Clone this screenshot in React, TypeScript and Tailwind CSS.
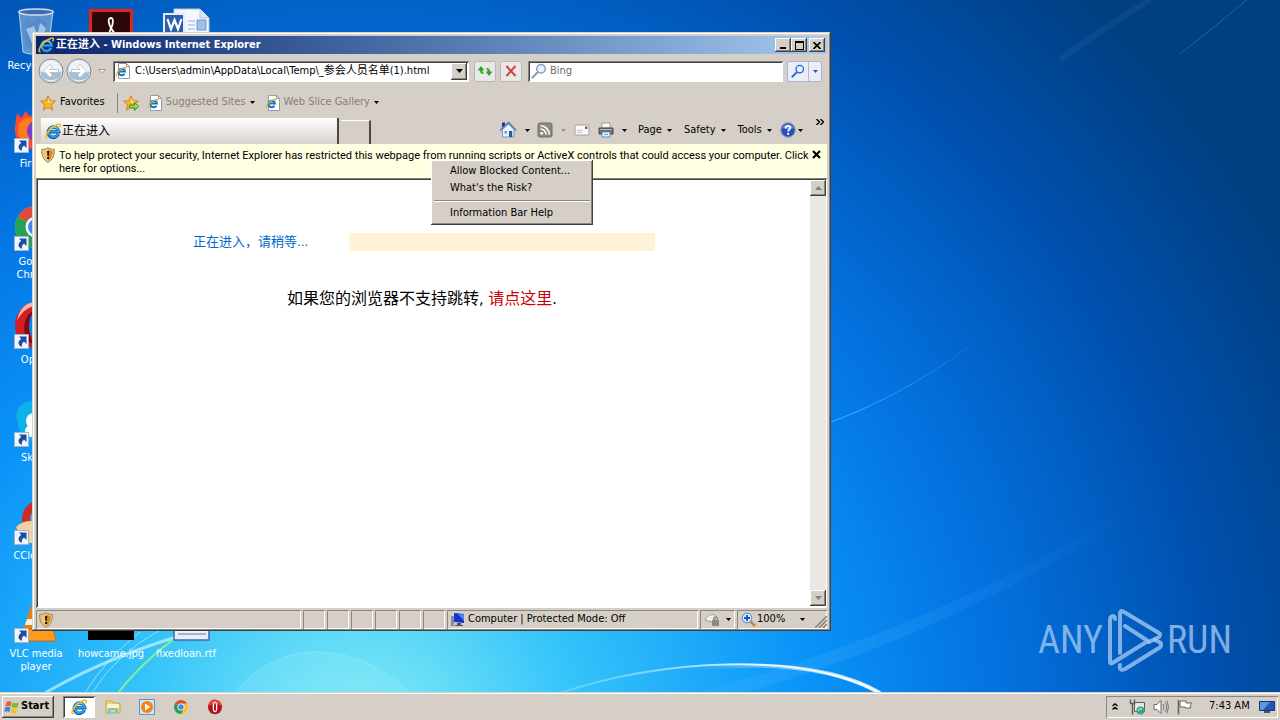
import React from "react";

const raised =
  "bg-[#d6cfc8] shadow-[inset_-1px_-1px_#404040,inset_1px_1px_#ffffff,inset_-2px_-2px_#8a8680]";
const sunken =
  "shadow-[inset_1px_1px_#808080,inset_-1px_-1px_#ffffff,inset_2px_2px_#404040]";
const pane = "shadow-[inset_1px_1px_#8a8680,inset_-1px_-1px_#ffffff]";

type IconProps = { className?: string };

const Arrow = ({ className = "text-black" }: IconProps) => (
  <svg className={`shrink-0 ${className}`} width="5" height="3" viewBox="0 0 5 3" aria-hidden>
    <path d="M0 0h5L2.500 3z" fill="currentColor" />
  </svg>
);

const IeMark = ({ className = "size-4" }: IconProps) => (
  <svg className={`shrink-0 ${className}`} viewBox="0 0 16 16" fill="none" aria-hidden>
    <path d="M13.300 11.200A5.200 5.200 0 1 1 13.700 8.700H5" stroke="#0b4f9e" strokeWidth="3.400" />
    <path d="M13 11A5 5 0 1 1 13.500 8.500H5" stroke="#2f9fe8" strokeWidth="2.200" />
    <path d="M4.500 6A5 5 0 0 1 12 5.200" stroke="#8fdcff" strokeWidth="1" />
    <path d="M2 14.800C-1.500 13.500 5 4.500 12.500 1.500c3-1.200 3.500.3 2.400 2.400" stroke="#f2bd1d" strokeWidth="1.500" strokeLinecap="round" />
  </svg>
);

const IePage = ({ className = "size-4" }: IconProps) => (
  <svg className={`shrink-0 ${className}`} viewBox="0 0 16 16" fill="none" aria-hidden>
    <path d="M3.500.5h8l3 3v12h-11z" fill="#fff" stroke="#8e9bb0" />
    <path d="M11.500.5v3h3" stroke="#8e9bb0" />
    <path d="M9.500 10.800A3.300 3.300 0 1 1 10 8.600H4" stroke="#1673c4" strokeWidth="2" />
    <path d="M1.500 13C0 12 4 6 9.500 4.300c2-.5 1.800.7 1.200 1.500" stroke="#e9b41d" strokeWidth="1.200" />
  </svg>
);

const Star = ({ add = false }: { add?: boolean }) => (
  <svg className="size-4 shrink-0" viewBox="0 0 16 16" aria-hidden>
    <path d="M8 .8l2.200 4.800 5.200.6-3.900 3.500 1.100 5.300L8 12.400 3.400 15l1.100-5.300L.6 6.200l5.200-.6z" fill="#fbb42c" stroke="#c77a0a" strokeWidth=".8" />
    <path d="M8 2.800l1.500 3.500 3.600.5-5.100 1z" fill="#ffe38a" />
    {add && <path d="M6.500 10h5V7.500l4.300 3.900-4.300 3.900v-2.500h-5z" fill="#8fe05c" stroke="#2f8d1c" strokeWidth=".9" />}
  </svg>
);

const Shield = () => (
  <svg className="size-4 shrink-0" viewBox="0 0 16 16" aria-hidden>
    <path d="M8 .7c2 1.300 4 1.700 6.300 1.700.2 6-1.300 10.300-6.300 13-5-2.700-6.500-7-6.300-13C4 2.400 6 2 8 .7z" fill="#f0c479" stroke="#8f867a" />
    <path d="M8 2.500v11.200c3.500-2.300 4.800-5.600 4.700-9.800-1.800-.1-3.200-.5-4.700-1.400z" fill="#d98a1c" />
    <path d="M7 4h2.200l-.4 5H7.400zM7.100 10h2v2h-2z" fill="#2a1a05" />
  </svg>
);

const Glass = ({ color = "#2f6fd6", className = "size-4" }: { color?: string; className?: string }) => (
  <svg className={`shrink-0 ${className}`} viewBox="0 0 16 16" fill="none" aria-hidden>
    <path d="M6.500 9.500L1.500 14.500" stroke={color} strokeWidth="2.200" strokeLinecap="round" />
    <circle cx="10" cy="5.800" r="4.300" fill="#e6f3ff" stroke={color} strokeWidth="1.500" />
  </svg>
);

const RoundArrow = ({ flip = false }: { flip?: boolean }) => (
  <svg className={flip ? "size-[26px] -scale-x-100" : "size-[26px]"} viewBox="0 0 26 26" aria-hidden>
    <circle cx="13" cy="13" r="12" fill="#dfe6ec" stroke="#818a94" />
    <path d="M2.500 13a10.500 10.500 0 0 1 21 0c-6 2-15 2-21 0z" fill="#eef3f7" />
    <path d="M2.500 13.500c5 2 16 2 21 0a10.500 10.500 0 0 1-21 0z" fill="#a3c0d2" />
    <path d="M6 20c4 3 10 3 14 0-3 4.500-11 4.500-14 0z" fill="#e6f6fc" />
    <path d="M5.500 13l6.500-6.500 2.500 2.500-2.500 2.500h8.500v3H12l2.500 2.500-2.500 2.500z" fill="#fff" stroke="#93a5b2" strokeWidth=".6" />
  </svg>
);

const HomeIcon = () => (
  <svg className="size-[18px]" viewBox="0 0 18 18" aria-hidden>
    <path d="M3 1.500h3V6H3z" fill="#1c2fa0" />
    <path d="M3.500 8.500L9.500 3l5.500 5.500V16h-11.500z" fill="#e8f0fb" stroke="#8093b8" />
    <path d="M1 9.500L9.500 1.500 17 9.500" fill="none" stroke="#5a78b8" strokeWidth="1.600" />
    <path d="M10 10h3.200v6H10z" fill="#235b93" />
    <path d="M5.500 10h2.500v2.500H5.500z" fill="#4aa0dd" />
  </svg>
);

const FeedIcon = () => (
  <svg className="size-4" viewBox="0 0 16 16" fill="none" aria-hidden>
    <rect x="1" y="1" width="14" height="14" rx="2" fill="#8c8a88" stroke="#6e6c6a" />
    <circle cx="4.700" cy="11.300" r="1.400" fill="#fff" />
    <path d="M3.500 7a5.500 5.500 0 0 1 5.500 5.500M3.500 3.800a8.700 8.700 0 0 1 8.700 8.700" stroke="#fff" strokeWidth="1.600" />
  </svg>
);

const MailIcon = () => (
  <svg className="h-3 w-4" viewBox="0 0 16 12" aria-hidden>
    <path d="M1 1h14v10H1z" fill="#fafafa" stroke="#a5a3a0" />
    <path d="M11 2.500h2.500V5H11z" fill="#d83a34" />
    <path d="M3 6.500h6M3 8.500h5" stroke="#c4c4c4" />
  </svg>
);

const PrinterIcon = () => (
  <svg className="size-4" viewBox="0 0 16 16" aria-hidden>
    <path d="M4 1h8v5H4z" fill="#fff" stroke="#9a9a9a" />
    <path d="M1 6h14v6H1z" fill="#6e6e70" stroke="#4c4c4e" />
    <path d="M2 7h12v1H2z" fill="#b8b8ba" />
    <path d="M4 10h8v5H4z" fill="#e9f6fc" stroke="#5a8fae" />
    <path d="M6 12h4v1H6z" fill="#33b3df" />
  </svg>
);

const HelpIcon = () => (
  <svg className="size-4" viewBox="0 0 16 16" fill="none" aria-hidden>
    <circle cx="8" cy="8" r="7.300" fill="#2752ba" stroke="#9aa5bd" strokeWidth="1.200" />
    <path d="M2.500 6a6 6 0 0 1 11 0c-3 1.500-8 1.500-11 0z" fill="#6f94e0" />
    <path d="M5.600 6.200C5.700 3 10.600 3.300 10.300 6c-.2 1.500-2.200 1.600-2.200 3.400" stroke="#fff" strokeWidth="1.700" />
    <circle cx="8.100" cy="11.800" r="1.100" fill="#fff" />
  </svg>
);

const Shortcut = () => (
  <svg className="absolute bottom-0 left-[14px] size-[15px]" viewBox="0 0 15 15" aria-hidden>
    <path d="M.5.5h14v14H.5z" fill="#f1f5fb" stroke="#9fb3cc" />
    <path d="M5 2.500h7.500V10L10 7.500C8 9 7.500 10.500 8 12.800 3.500 11.500 3.500 7 7.300 5z" fill="#1c4da0" />
  </svg>
);

const BinArt = () => (
  <svg className="size-12" viewBox="0 0 48 48" aria-hidden>
    <path d="M7 4h34l-5 41c-5 3-20 3-25 0z" fill="#8db2d8" fillOpacity=".65" stroke="#b5cfe6" />
    <path d="M13 12l7 3 6-4 9 5-2 24H14z" fill="#4f86c6" fillOpacity=".6" />
    <path d="M14 22l8-3 3 8-5 9zM28 16l6 5-4 12-4-8z" fill="#c4dcf0" fillOpacity=".7" />
    <ellipse cx="24" cy="5" rx="17" ry="3" fill="#3a6cae" stroke="#d3dce6" strokeWidth="1.500" />
  </svg>
);

const FirefoxArt = () => (
  <svg className="size-12" viewBox="0 0 48 48" aria-hidden>
    <path d="M5 8l4 5 5-7 3 5C34 4 45 15 43 29c-2 11-12 16-21 15C8 43 2 32 3 22z" fill="#ff4a30" />
    <path d="M7 19c4-7 12-8 18-4L14 40C7 35 4 27 7 19z" fill="#ff7b1c" />
    <circle cx="26" cy="26" r="11" fill="#7a3fd0" />
  </svg>
);

const ChromeArt = ({ className = "size-12" }: IconProps) => (
  <svg className={className} viewBox="0 0 48 48" aria-hidden>
    <circle cx="24" cy="24" r="21" fill="#fbc02d" />
    <path d="M24 24L5.800 13.500A21 21 0 0 1 42.200 13.500H24z" fill="#dd4b3e" />
    <path d="M5.800 13.500L24 24v21A21 21 0 0 1 5.800 13.500z" fill="#27a155" />
    <path d="M24 24l9 5-9 16z" fill="#27a155" />
    <circle cx="24" cy="24" r="10.500" fill="#fff" />
    <circle cx="24" cy="24" r="8" fill="#4386ee" />
  </svg>
);

const OperaArt = ({ className = "size-12" }: IconProps) => (
  <svg className={className} viewBox="0 0 48 48" aria-hidden>
    <ellipse cx="24" cy="24" rx="21" ry="22" fill="#b80f1a" />
    <path d="M4 20C6 5 18 1 24 2c8 0 18 6 20 18-12-6-28-6-40 0z" fill="#e5453f" />
    <ellipse cx="24" cy="24" rx="7" ry="16" fill="#fff" />
    <ellipse cx="24" cy="24" rx="3" ry="13" fill="#a30d15" />
  </svg>
);

const OperaRing = () => (
  <svg className="size-12" viewBox="0 0 48 48" aria-hidden>
    <path fillRule="evenodd" d="M24 1a21 23 0 1 0 0 46 21 23 0 1 0 0-46zM25 9c5 0 8 7 8 15s-3 15-8 15-8-7-8-15 3-15 8-15z" fill="#d01f26" />
    <path d="M5 20C7 6 16 1 24 1c4 0 7 1 10 3C24 2 10 8 5 20z" fill="#f7b3ae" />
    <path d="M25 9c-9 2-11 24-3 34l-5-2C9 32 11 11 25 9z" fill="#7d0a10" />
  </svg>
);

const SkypeArt = () => (
  <svg className="size-12" viewBox="0 0 48 48" aria-hidden>
    <path d="M14 3c5-2 9 0 11 2 13 0 21 10 19 21 4 11-7 20-17 16C14 44 5 34 6 23 2 15 6 6 14 3z" fill="#0fb2e8" />
    <circle cx="22" cy="22" r="8" fill="#fff" />
    <circle cx="19" cy="32" r="6" fill="#fff" />
  </svg>
);

const CleanerArt = () => (
  <svg className="size-12" viewBox="0 0 48 48" aria-hidden>
    <circle cx="29" cy="22" r="19" fill="#cf2c27" />
    <circle cx="29" cy="22" r="11" fill="#58a6dc" />
    <path d="M4 30c8-7 16-7 24-4v20H12z" fill="#f2cf9e" />
  </svg>
);

const ConeArt = () => (
  <svg className="size-12" viewBox="0 0 48 48" aria-hidden>
    <path d="M22 3h5l13 35H10z" fill="#f07a12" />
    <path d="M15 24h19l2 6H13z" fill="#f4f1ec" />
    <path d="M9 34h32l3 12H3z" fill="#ff9a1e" stroke="#cf6508" />
  </svg>
);

const AcrobatArt = () => (
  <svg className="size-12" viewBox="0 0 48 48" fill="none" aria-hidden>
    <path d="M3.500 3.500h41v41h-41z" fill="#2b0808" stroke="#e2231a" strokeWidth="3" />
    <path d="M24 11c-4 0-2 7 0 10 2-3 3-10 0-10zM24 21c-1 4-4 10-9 16M24 21c2 4 5 8 12 11" stroke="#fff" strokeWidth="1.800" />
  </svg>
);

const WordArt = () => (
  <svg className="size-12" viewBox="0 0 48 48" fill="none" aria-hidden>
    <path d="M12 2h26l9 9v36H12z" fill="#f4f8fd" stroke="#b6c6dc" />
    <path d="M38 2v9h9" fill="#dce7f4" stroke="#b6c6dc" />
    <path d="M26 14h7M26 18h7M26 22h7M26 26h19" stroke="#8fb0dc" />
    <path d="M35 13h9v10h-9z" fill="#9fc0e8" stroke="#6a94cc" />
    <path d="M2 7h20v20H2z" fill="#2d5fae" stroke="#e3edf8" strokeWidth="2" />
    <path d="M5.500 12l3.500 10 3.500-9 3.500 9 3.500-10" stroke="#fff" strokeWidth="2.200" />
  </svg>
);

const BlackArt = () => (
  <svg className="size-12" viewBox="0 0 48 48" aria-hidden>
    <path d="M1 4h46v41H1z" fill="#000" />
  </svg>
);

const DocArt = () => (
  <svg className="size-12" viewBox="0 0 48 48" aria-hidden>
    <path d="M12 3h35v42H12z" fill="#e8effb" stroke="#4a68a8" strokeWidth="1.500" />
    <path d="M16 34h28M16 39h28" stroke="#8aa3d4" strokeWidth="1.500" />
  </svg>
);

const columns = [
  {
    at: "justify-start",
    items: [
      { label: "Recycle Bin", art: <BinArt />, link: false },
      { label: "Firefox", art: <FirefoxArt />, link: true },
      { label: "Google Chrome", art: <ChromeArt />, link: true },
      { label: "Opera", art: <OperaRing />, link: true },
      { label: "Skype", art: <SkypeArt />, link: true },
      { label: "CCleaner", art: <CleanerArt />, link: true },
      { label: "VLC media player", art: <ConeArt />, link: true },
    ],
  },
  {
    at: "justify-between",
    items: [
      { label: "", art: <AcrobatArt />, link: false },
      { label: "howcame.jpg", art: <BlackArt />, link: false },
    ],
  },
  {
    at: "justify-between",
    items: [
      { label: "", art: <WordArt />, link: false },
      { label: "fixedloan.rtf", art: <DocArt />, link: false },
    ],
  },
];

const Wallpaper = () => (
  <svg className="absolute inset-0 h-full w-full" viewBox="0 0 1280 720" preserveAspectRatio="xMidYMin slice" fill="none" aria-hidden>
    <defs>
      <linearGradient id="arc" x1="560" x2="900" y1="0" y2="0" gradientUnits="userSpaceOnUse">
        <stop offset="0" stopColor="#7fd8ff" stopOpacity=".5" />
        <stop offset=".6" stopColor="#d8f4ff" />
        <stop offset="1" stopColor="#fff" />
      </linearGradient>
      <linearGradient id="arcGlow" x1="700" x2="860" y1="0" y2="0" gradientUnits="userSpaceOnUse">
        <stop offset="0" stopColor="#fff" stopOpacity="0" />
        <stop offset="1" stopColor="#fff" stopOpacity=".8" />
      </linearGradient>
      <linearGradient id="ray" x1="830" x2="990" y1="0" y2="0" gradientUnits="userSpaceOnUse">
        <stop offset="0" stopColor="#5cc0ff" stopOpacity=".8" />
        <stop offset="1" stopColor="#5cc0ff" stopOpacity="0" />
      </linearGradient>
      <linearGradient id="beam" x1="830" x2="1140" y1="680" y2="510" gradientUnits="userSpaceOnUse">
        <stop offset="0" stopColor="#4db4ff" stopOpacity=".2" />
        <stop offset="1" stopColor="#4db4ff" stopOpacity="0" />
      </linearGradient>
    </defs>
    <path d="M700 692Q930 630 1130 508L1134 514Q940 640 720 700z" fill="url(#beam)" />
    <path d="M1180 54Q1215 27 1250-3" stroke="#5f9bd0" strokeOpacity=".4" />
    <path d="M1060 60Q1100 30 1150 0" stroke="#5f9bd0" strokeOpacity=".1" strokeWidth="6" />
    <path d="M820 426Q910 395 990 330" stroke="url(#ray)" />
    <path d="M230 700C270 640 350 635 408 692" stroke="#a8f0ff" strokeOpacity=".4" />
    <path d="M230 700C270 640 350 635 408 692z" fill="#a8f0ff" fillOpacity=".15" />
    <path d="M560 693C660 660 800 650 880 693" stroke="url(#arc)" strokeWidth="2" />
    <path d="M700 668C780 661 840 670 880 693" stroke="url(#arcGlow)" strokeWidth="4" />
    <path d="M45 693Q110 655 200 630" stroke="#c8f4ff" strokeWidth="3" strokeOpacity=".7" />
    <path d="M85 693Q105 660 140 632M92 693Q115 655 160 630" stroke="#b8eeff" strokeOpacity=".7" />
    <path d="M118 693Q148 655 190 628" stroke="#8ff08a" strokeWidth="2" />
  </svg>
);

const Desktop = () => (
  <ul className="absolute left-0 top-[7px] flex h-[668px] text-center text-[11px] leading-[13px] text-white">
    {columns.map((col, c) => (
      <li key={c} className="w-[75px]">
        <ul className={`flex h-full flex-col ${col.at}`}>
          {col.items.map((item) => (
            <li key={item.label} className="relative h-[98px] w-[72px] shrink-0 last:h-[80px]">
              <div className="relative flex h-12 justify-center">
                {item.art}
                {item.link && <Shortcut />}
              </div>
              <p className="mt-1">{item.label}</p>
            </li>
          ))}
        </ul>
      </li>
    ))}
  </ul>
);

const TitleBar = () => (
  <header className="flex h-[18px] shrink-0 items-center gap-[2px] bg-linear-to-r from-[#0a246a] to-[#a6caf0] px-[2px]">
    <IeMark />
    <h1 className="flex-1 text-[11px] font-bold text-white">正在进入 - Windows Internet Explorer</h1>
    <div className="flex">
      <button aria-label="Minimize" className={`flex h-[14px] w-4 items-end justify-center pb-[3px] ${raised}`}>
        <span className="h-[2px] w-[6px] bg-black" />
      </button>
      <button aria-label="Maximize" className={`flex h-[14px] w-4 items-center justify-center ${raised}`}>
        <span className="h-[9px] w-[9px] border border-t-2 border-black" />
      </button>
      <button aria-label="Close" className={`ml-[2px] flex h-[14px] w-4 items-center justify-center ${raised}`}>
        <svg className="h-[7px] w-2" viewBox="0 0 8 7" aria-hidden>
          <path d="M.5 0l7 7M7.500 0l-7 7" stroke="#000" strokeWidth="1.600" />
        </svg>
      </button>
    </div>
  </header>
);

const NavBar = () => (
  <div className="flex h-[34px] shrink-0 items-center pl-[2px] pr-[5px]">
    <button aria-label="Back"><RoundArrow /></button>
    <button aria-label="Forward" className="ml-[2px]"><RoundArrow flip /></button>
    <button aria-label="Recent pages" className="ml-[6px] mr-[7px] flex h-4 items-center">
      <svg width="8" height="5" viewBox="0 0 8 5" aria-hidden>
        <path d="M.5.500h7L4 4.500z" fill="#e8e4e0" stroke="#a5a09a" />
      </svg>
    </button>
    <div className={`flex h-[21px] w-[356px] items-center bg-white px-[2px] ${sunken}`}>
      <IePage />
      <input
        aria-label="Address"
        className="ml-1 min-w-0 flex-1 bg-transparent pt-px text-[11px] outline-none"
        defaultValue="C:\Users\admin\AppData\Local\Temp\_参会人员名单(1).html"
      />
      <button aria-label="Show address list" className={`flex h-[17px] w-4 items-center justify-center ${raised}`}>
        <svg width="7" height="4" viewBox="0 0 7 4" aria-hidden><path d="M0 0h7L3.500 4z" /></svg>
      </button>
    </div>
    <button aria-label="Refresh" className="ml-[5px] flex h-[21px] w-[22px] items-center justify-center rounded-xs border border-[#b5b8bf] bg-[#ebe9e8]">
      <svg className="size-4" viewBox="0 0 16 16" fill="#2ba52b" aria-hidden>
        <path d="M.5 7.500L4 3l3.500 4.500H5.200c.3 1.800 1.200 2.800 2.300 3.500C4.500 11.500 3 10 2.900 7.500z" />
        <path d="M15.500 8.500L12 13 8.500 8.500h2.300C10.500 6.700 9.600 5.700 8.500 5c3-.5 4.500 1 4.600 3.500z" />
      </svg>
    </button>
    <button aria-label="Stop" className="ml-1 flex h-[21px] w-[22px] items-center justify-center rounded-xs border border-[#b5b8bf] bg-[#ebe9e8]">
      <svg className="size-3" viewBox="0 0 12 12" aria-hidden>
        <path d="M1.500 1l9 10M10.500 1l-9 10" stroke="#cf4343" strokeWidth="2" />
      </svg>
    </button>
    <div className={`ml-[6px] flex h-[21px] flex-1 items-center bg-white px-[3px] ${sunken}`}>
      <Glass color="#8ba0bd" />
      <input aria-label="Search" placeholder="Bing" className="ml-[3px] min-w-0 flex-1 bg-transparent pt-px text-[11px] outline-none placeholder:text-[#6d6d6d]" />
    </div>
    <div className="ml-1 flex h-[21px] w-[35px] rounded-xs border border-[#a9b4cc] bg-[#e9eef8]">
      <button aria-label="Go" className="flex flex-1 items-center justify-center border-r border-[#b4bccb]">
        <Glass color="#2a62d8" className="size-[14px]" />
      </button>
      <button aria-label="Search options" className="flex w-3 items-center justify-center">
        <Arrow className="text-[#2558b8]" />
      </button>
    </div>
  </div>
);

const FavoritesBar = () => (
  <div className="flex h-7 shrink-0 items-center pl-1 pt-px">
    <button className="flex items-center gap-1">
      <Star /> Favorites
    </button>
    <span className="ml-3 mr-[5px] h-5 w-px bg-[#8a8680]" />
    <button aria-label="Add to Favorites Bar"><Star add /></button>
    <button className="ml-2 flex items-center gap-[3px] text-[#85807a]">
      <IePage /> Suggested Sites <Arrow className="ml-px text-black" />
    </button>
    <button className="ml-[10px] flex items-center gap-[3px] text-[#85807a]">
      <IePage /> Web Slice Gallery <Arrow className="ml-px text-black" />
    </button>
  </div>
);

const CommandBar = () => (
  <div className="flex flex-1 items-center pl-32">
    <button aria-label="Home" className="flex items-center gap-2"><HomeIcon /><Arrow /></button>
    <button aria-label="Feeds" className="ml-[7px] flex items-center gap-2"><FeedIcon /><Arrow className="text-[#9a958f]" /></button>
    <button aria-label="Read mail" className="ml-2"><MailIcon /></button>
    <button aria-label="Print" className="ml-2 flex items-center gap-2"><PrinterIcon /><Arrow /></button>
    <button className="ml-[11px] flex items-center gap-[5px]">Page <Arrow /></button>
    <button className="ml-3 flex items-center gap-[5px]">Safety <Arrow /></button>
    <button className="ml-3 flex items-center gap-[5px]">Tools <Arrow /></button>
    <button aria-label="Help" className="ml-2 flex items-center gap-[2px]"><HelpIcon /><Arrow /></button>
    <button aria-label="More commands" className="ml-auto mr-[3px] self-start">
      <svg className="mt-[3px] h-[6px] w-2" viewBox="0 0 8 6" fill="none" aria-hidden>
        <path d="M.5 0l3 3-3 3M4.500 0l3 3-3 3" stroke="#000" strokeWidth="1.400" />
      </svg>
    </button>
  </div>
);

const TabRow = () => (
  <div className="flex h-7 shrink-0 pl-[5px]">
    <div role="tablist" className="flex items-end gap-[2px]">
      <button
        role="tab"
        aria-selected="true"
        className="flex h-[26px] w-[298px] items-center gap-px border-r-2 border-[#4a4845] bg-linear-to-b from-white to-[#d8d2cc] pl-1 text-[12px]"
      >
        <IeMark /> 正在进入
      </button>
      <button aria-label="New Tab" className="h-6 w-[30px] border-r-2 border-t border-r-[#4a4845] border-t-white bg-[#d6cfc8]" />
    </div>
    <CommandBar />
  </div>
);

const InfoBar = () => (
  <div role="alert" className="flex h-[34px] shrink-0 items-start bg-[#ffffe1] pl-1 pr-[6px] pt-[3px]">
    <Shield />
    <p className="ml-[3px] mt-[2px] flex-1 font-['Roboto'] leading-[13px]">
      To help protect your security, Internet Explorer has restricted this webpage from running scripts or ActiveX controls that could access your computer. Click
      <br />
      here for options...
    </p>
    <button aria-label="Close the Information Bar" className="mt-[3px]">
      <svg className="size-[9px]" viewBox="0 0 9 9" aria-hidden>
        <path d="M1 1l7 7M8 1L1 8" stroke="#000" strokeWidth="2.200" />
      </svg>
    </button>
  </div>
);

const ScrollBar = () => (
  <div className="flex w-4 flex-col justify-between bg-[#ebe7e3]">
    <button aria-label="Scroll up" className={`flex h-4 items-center justify-center ${raised}`}>
      <svg width="7" height="4" viewBox="0 0 7 4" aria-hidden><path d="M0 4h7L3.500 0z" fill="#85807a" /></svg>
    </button>
    <button aria-label="Scroll down" className={`flex h-4 items-center justify-center ${raised}`}>
      <svg width="7" height="4" viewBox="0 0 7 4" aria-hidden><path d="M0 0h7L3.500 4z" fill="#85807a" /></svg>
    </button>
  </div>
);

const PageView = () => (
  <main className={`flex min-h-0 flex-1 bg-white py-[2px] pl-[2px] pr-px ${sunken}`}>
    <div className="flex-1">
      <div className="mt-[53px] flex items-center pl-[155px] text-[13px] leading-[18px] text-[#0066cc]">
        <p className="w-[156px]">正在进入，请稍等...</p>
        <div role="progressbar" aria-label="Loading" className="h-[18px] w-[306px] bg-[#fff2d6]" />
      </div>
      <p className="mt-9 pl-[249px] text-[16px] leading-6 text-black">
        如果您的浏览器不支持跳转, <a href="#enter" className="text-[#cc0000]">请点这里</a>.
      </p>
    </div>
    <ScrollBar />
  </main>
);

const StatusBar = () => (
  <footer className="flex h-[21px] shrink-0 items-stretch gap-[2px] pt-[2px]">
    <div className={`flex flex-1 items-center pl-[2px] ${pane}`}><Shield /></div>
    {[0, 1, 2, 3, 4, 5].map((n) => (
      <div key={n} className={`w-[22px] ${pane}`} />
    ))}
    <div className={`flex w-[251px] items-center gap-[2px] pl-[3px] ${pane}`}>
      <svg className="size-4 shrink-0" viewBox="0 0 16 16" aria-hidden>
        <path d="M1 4h3v10H1z" fill="#8a8a90" />
        <path d="M4 1l10 1v9L4 10z" fill="#1436d0" />
        <path d="M8 2l6 .5V9z" fill="#5c82f4" />
        <path d="M7 11h4v2h2v1H5v-1h2z" fill="#55555c" />
      </svg>
      Computer | Protected Mode: Off
    </div>
    <button aria-label="InPrivate settings" className={`flex w-[35px] items-center justify-between px-1 ${pane}`}>
      <svg className="size-4" viewBox="0 0 16 16" fill="none" aria-hidden>
        <path d="M1 8c3-6 9-7 12-3l-5 5z" fill="#f2f1f0" stroke="#a29d98" />
        <path d="M8 8h7v6H8z" fill="#8d8985" />
        <path d="M9.500 8c0-4 4-4 4 0" stroke="#8d8985" strokeWidth="1.300" />
      </svg>
      <Arrow />
    </button>
    <button className={`flex w-[90px] items-center pl-1 ${pane}`}>
      <svg className="size-4" viewBox="0 0 16 16" fill="none" aria-hidden>
        <path d="M9 9l5 5" stroke="#c8863c" strokeWidth="2.500" />
        <circle cx="6" cy="6" r="4.800" fill="#d5ebff" stroke="#4d86c8" />
        <path d="M6 3v6M3 6h6" stroke="#1a56b8" strokeWidth="1.800" />
      </svg>
      100%
      <Arrow className="ml-[15px] text-black" />
      <svg className="ml-auto mb-px size-3 self-end" viewBox="0 0 12 12" aria-hidden>
        <path d="M0 12L12 0M4 12l8-8M8 12l4-4" stroke="#85807a" strokeWidth="1.500" />
      </svg>
    </button>
  </footer>
);

const OptionsMenu = () => (
  <ul role="menu" className={`absolute left-[399px] top-[128px] w-[162px] p-[3px] ${raised}`}>
    <li><button role="menuitem" className="h-[17px] w-full pl-4 text-left">Allow Blocked Content...</button></li>
    <li><button role="menuitem" className="h-[17px] w-full pl-4 text-left">What's the Risk?</button></li>
    <li role="separator" className="my-[3px] h-[2px] border-t border-[#8a8680] bg-white" />
    <li><button role="menuitem" className="h-[17px] w-full pl-4 text-left">Information Bar Help</button></li>
  </ul>
);

const BrowserWindow = () => (
  <section
    aria-label="Windows Internet Explorer"
    className="absolute left-8 top-8 flex h-[599px] w-[799px] flex-col bg-[#d6cfc8] px-1 pb-[2px] pt-1 text-[11px] shadow-[inset_-1px_-1px_#404040,inset_1px_1px_#d6cfc8,inset_-2px_-2px_#8a8680,inset_2px_2px_#ffffff]"
  >
    <TitleBar />
    <NavBar />
    <FavoritesBar />
    <TabRow />
    <InfoBar />
    <PageView />
    <StatusBar />
    <OptionsMenu />
  </section>
);

const Watermark = () => (
  <div className="absolute bottom-5 right-12 flex items-center gap-1 font-['Liberation_Sans_Narrow','Roboto_Condensed','Roboto'] text-[38px] leading-[64px] text-[#a9cdf3]/75">
    <span>ANY</span>
    <svg className="h-16 w-14" viewBox="0 0 56 64" fill="none" strokeWidth="4" strokeLinejoin="round" strokeLinecap="round" aria-hidden>
      <path d="M8 11C8 7 3 7 3 12V53c0 3 1 3 4 1L41 33 18 18" stroke="currentColor" />
      <path d="M13 45V6c0-3 1-4 4-2L52 25c2 1 1 3 0 4l-10 5" stroke="currentColor" />
      <path d="M13 57c-1 4 1 6 5 4L52 40c3-2 3-5 0-6l-4-2" stroke="currentColor" />
    </svg>
    <span>RUN</span>
  </div>
);

const Taskbar = () => (
  <nav aria-label="Taskbar" className="relative flex h-7 shrink-0 items-center border-t border-[#d6cfc8] bg-[#d6cfc8] px-[2px] text-[11px] shadow-[inset_0_1px_#ffffff]">
    <button className={`flex h-[22px] w-[52px] items-center gap-px pl-[2px] font-bold ${raised}`}>
      <svg className="size-4" viewBox="0 0 16 16" aria-hidden>
        <path d="M2.500 3C4.500 1.700 6 2 7.500 3L6.500 7.500c-1.500-1-3-1.200-5-.2z" fill="#ec5b2b" />
        <path d="M8.500 3.500c2 1 4 1 6.200 0l-1.200 4.700c-2 .9-4 .8-6-.2z" fill="#7cba37" />
        <path d="M1.300 8.300c2-1 3.500-.8 5 .2l-1 4.500c-1.500-1-3-1.200-5-.2z" fill="#3c82d8" />
        <path d="M7.300 9c2 1 4 1 6 .2l-1.200 4.500c-2 .9-4 .8-6-.2z" fill="#f7c22b" />
      </svg>
      Start
    </button>
    <button aria-label="Internet Explorer" className={`ml-[9px] flex h-[22px] w-8 items-center justify-center bg-white ${sunken}`}>
      <IeMark />
    </button>
    <div className="ml-[10px] flex gap-[18px]">
      <button aria-label="Windows Explorer">
        <svg className="size-4" viewBox="0 0 16 16" aria-hidden>
          <path d="M1 2h6l1 2h7v10H1z" fill="#f0d474" stroke="#caa63e" />
          <path d="M2 5h12v4H2z" fill="#fdf3bf" />
          <path d="M3 14V9h10v5h-3v-3H6v3z" fill="#7cc3ea" />
        </svg>
      </button>
      <button aria-label="Media Player">
        <svg className="size-4" viewBox="0 0 16 16" aria-hidden>
          <path d="M.5.5h15v15H.5z" fill="#cfe5f8" stroke="#5a94cc" />
          <circle cx="8" cy="8" r="6" fill="#f5820c" />
          <path d="M6 4.500L11.500 8 6 11.500z" fill="#fff" />
        </svg>
      </button>
      <button aria-label="Chrome"><ChromeArt className="size-4" /></button>
      <button aria-label="Opera"><OperaArt className="size-4" /></button>
    </div>
    <div className={`ml-auto flex h-[22px] w-[172px] items-center pl-[6px] pr-[3px] ${pane}`}>
      <button aria-label="Show hidden icons">
        <svg className="h-[7px] w-[6px]" viewBox="0 0 6 7" fill="none" aria-hidden>
          <path d="M.5 3L3 .8 5.500 3M.5 6.500L3 4.300l2.500 2.200" stroke="#000" strokeWidth="1.300" />
        </svg>
      </button>
      <svg className="ml-[11px] size-4" viewBox="0 0 16 16" fill="none" aria-hidden>
        <path d="M5.500 3.500h10v9h-10z" fill="#e8e8e8" stroke="#5c5c5c" />
        <path d="M1.500.5v4h4v-4M3.500 4.500v11" stroke="#5c5c5c" strokeWidth="1.400" />
        <circle cx="11.500" cy="11.500" r="4" fill="#37a58a" />
        <path d="M9.500 12a2 2 0 0 1 3.500-1.500" stroke="#fff" />
      </svg>
      <svg className="ml-2 size-4" viewBox="0 0 16 16" fill="none" aria-hidden>
        <path d="M1 5.500h3l4-4v13l-4-4H1z" fill="#fff" stroke="#666" />
        <path d="M10 5q2 3 0 6M12 3q3.500 5 0 10M14 1.500q3 6.500 0 13" stroke="#777" />
      </svg>
      <svg className="ml-2 size-4" viewBox="0 0 16 16" aria-hidden>
        <path d="M1.500 1v14.500" stroke="#666" strokeWidth="1.600" />
        <path d="M3 2h6v2h6l-2 3 1 2H8V8H3z" fill="#fff" stroke="#666" />
      </svg>
      <time className="ml-4">7:43 AM</time>
      <svg className="ml-auto h-3 w-4" viewBox="0 0 16 12" aria-hidden>
        <path d="M.5.5h15v9H.5z" fill="#2159b8" stroke="#15357a" />
        <path d="M1 1h10L4 9H1z" fill="#5e96e4" />
        <path d="M5 10h6v2H5z" fill="#555" />
      </svg>
    </div>
  </nav>
);

export default function App() {
  return (
    <div className="flex h-screen w-full flex-col overflow-hidden font-['DejaVu_Sans_Condensed','Noto_Sans_CJK_SC',sans-serif]">
      <div className="relative min-h-0 flex-1 overflow-hidden bg-[radial-gradient(circle_1050px_at_28%_108%,#8eeaf4_0%,#6ce0f6_8%,#36c4fa_21%,#0a94f8_43%,#0474e2_60%,#0050ae_82%,#003f80_100%)]">
        <Wallpaper />
        <Desktop />
        <Watermark />
        <BrowserWindow />
      </div>
      <Taskbar />
    </div>
  );
}
